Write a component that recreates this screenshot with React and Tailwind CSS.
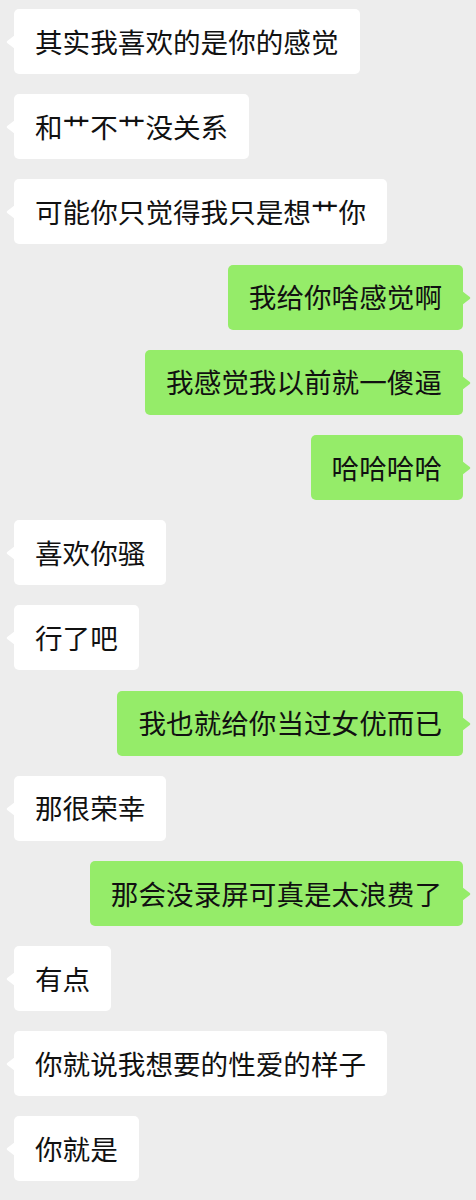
import React from "react";

const msgs = [
  ["l", "其实我喜欢的是你的感觉"],
  ["l", "和艹不艹没关系"],
  ["l", "可能你只觉得我只是想艹你"],
  ["r", "我给你啥感觉啊"],
  ["r", "我感觉我以前就一傻逼"],
  ["r", "哈哈哈哈"],
  ["l", "喜欢你骚"],
  ["l", "行了吧"],
  ["r", "我也就给你当过女优而已"],
  ["l", "那很荣幸"],
  ["r", "那会没录屏可真是太浪费了"],
  ["l", "有点"],
  ["l", "你就说我想要的性爱的样子"],
  ["l", "你就是"],
];

function Bubble({ side, text }) {
  const left = side === "l";
  return (
    <div className={left ? "flex justify-start pl-[14px]" : "flex justify-end pr-[13px]"}>
      <div
        className={
          "relative h-[65px] flex items-center px-[21px] rounded-[5px] text-[27.6px] leading-none text-[#111111] " +
          (left ? "bg-white" : "bg-[#95ec69]")
        }
      >
        <span>{text}</span>
        {left ? (
          <svg className="absolute left-[-8px] top-[26px]" width="9" height="14" viewBox="0 0 9 14">
            <path d="M9 0 L1.2 6 Q0 7 1.2 8 L9 14 Z" fill="#ffffff" />
          </svg>
        ) : (
          <svg className="absolute right-[-8px] top-[26px]" width="9" height="14" viewBox="0 0 9 14">
            <path d="M0 0 L7.8 6 Q9 7 7.8 8 L0 14 Z" fill="#95ec69" />
          </svg>
        )}
      </div>
    </div>
  );
}

export default function App() {
  return (
    <div
      className="w-[476px] h-[1200px] overflow-hidden bg-[#ededed] pt-[9px] flex flex-col gap-[20.2px]"
      style={{ fontFamily: '"Noto Sans CJK SC", "Noto Sans", sans-serif' }}
    >
      {msgs.map(([s, t], i) => (
        <Bubble key={i} side={s} text={t} />
      ))}
    </div>
  );
}
